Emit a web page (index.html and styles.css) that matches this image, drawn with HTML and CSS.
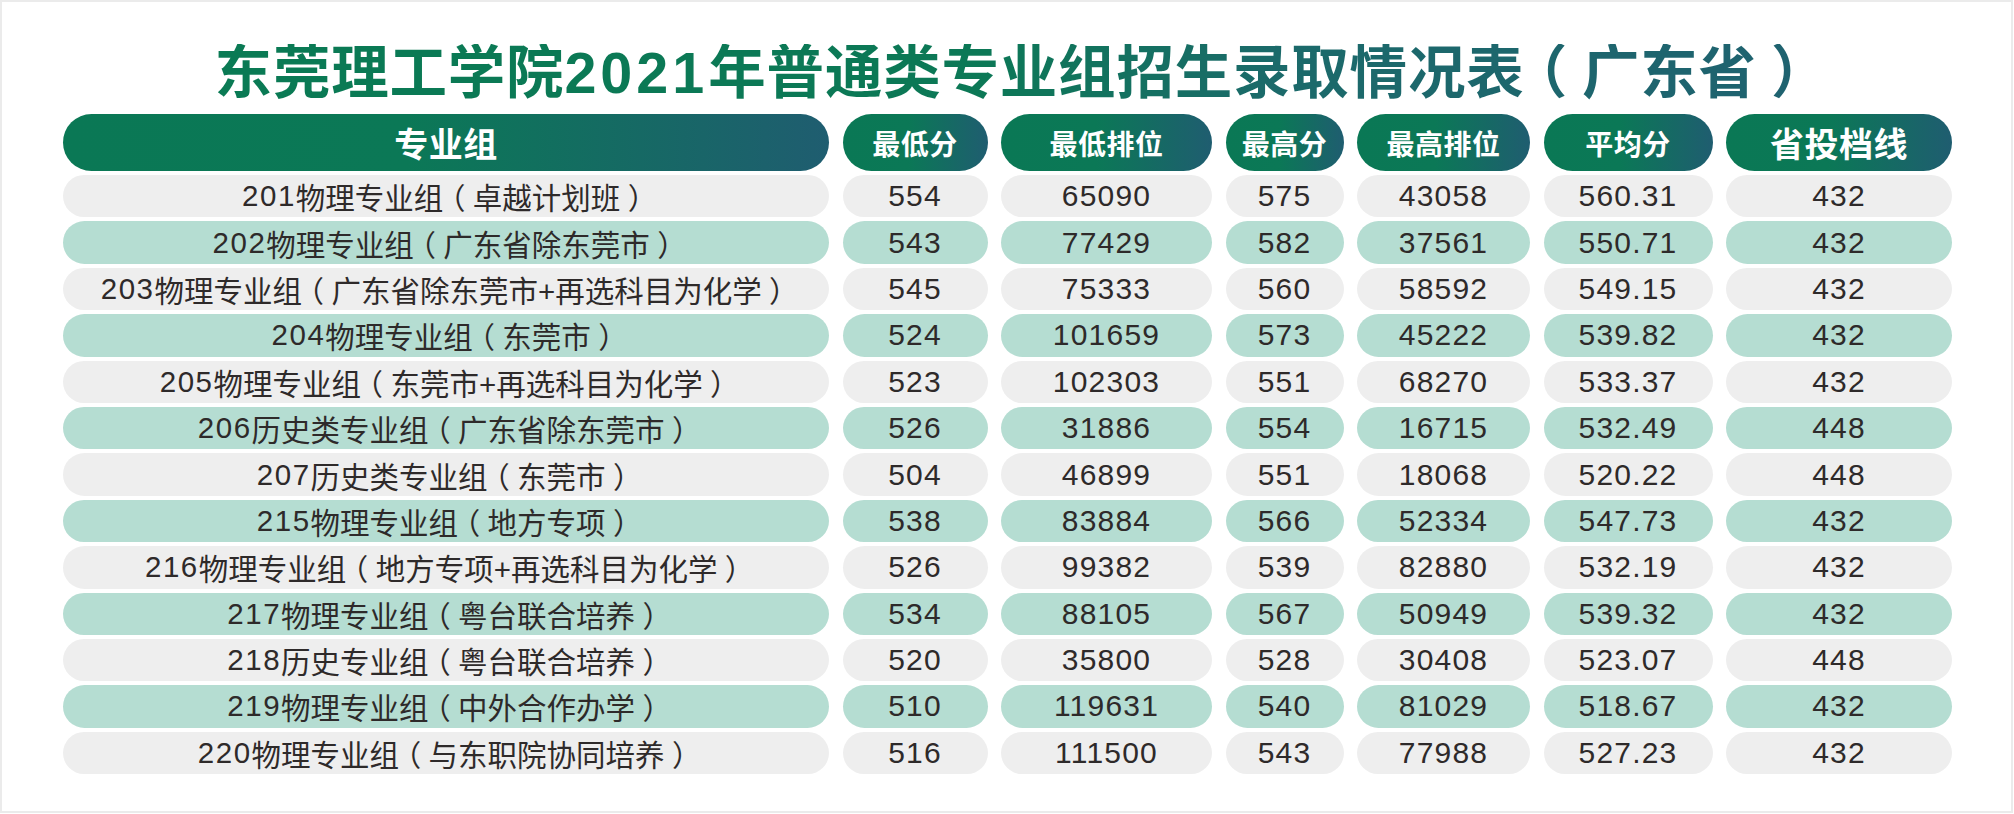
FILE: index.html
```html
<!DOCTYPE html>
<html lang="zh-CN">
<head>
<meta charset="utf-8">
<title>东莞理工学院2021年普通类专业组招生录取情况表（广东省）</title>
<link rel="stylesheet" href="styles.css">
</head>
<body>
<div class="frame">
  <div class="title-wrap">
    <h1 class="title">东莞理工学院<span class="yr">2021</span>年普通类专业组招生录取情况表<span class="pl">（</span>广东省<span class="pl">）</span></h1>
  </div>
  <div class="table">
    <div class="hd big">专业组</div>
    <div class="hd">最低分</div>
    <div class="hd">最低排位</div>
    <div class="hd">最高分</div>
    <div class="hd">最高排位</div>
    <div class="hd">平均分</div>
    <div class="hd big">省投档线</div>

    <div class="row">
      <div class="c name"><span class="code">201</span>物理专业组<span class="pl">（</span>卓越计划班<span class="pl">）</span></div>
      <div class="c n">554</div><div class="c n">65090</div><div class="c n">575</div><div class="c n">43058</div><div class="c n">560.31</div><div class="c n">432</div>
    </div>
    <div class="row alt">
      <div class="c name"><span class="code">202</span>物理专业组<span class="pl">（</span>广东省除东莞市<span class="pl">）</span></div>
      <div class="c n">543</div><div class="c n">77429</div><div class="c n">582</div><div class="c n">37561</div><div class="c n">550.71</div><div class="c n">432</div>
    </div>
    <div class="row">
      <div class="c name"><span class="code">203</span>物理专业组<span class="pl">（</span>广东省除东莞市+再选科目为化学<span class="pl">）</span></div>
      <div class="c n">545</div><div class="c n">75333</div><div class="c n">560</div><div class="c n">58592</div><div class="c n">549.15</div><div class="c n">432</div>
    </div>
    <div class="row alt">
      <div class="c name"><span class="code">204</span>物理专业组<span class="pl">（</span>东莞市<span class="pl">）</span></div>
      <div class="c n">524</div><div class="c n">101659</div><div class="c n">573</div><div class="c n">45222</div><div class="c n">539.82</div><div class="c n">432</div>
    </div>
    <div class="row">
      <div class="c name"><span class="code">205</span>物理专业组<span class="pl">（</span>东莞市+再选科目为化学<span class="pl">）</span></div>
      <div class="c n">523</div><div class="c n">102303</div><div class="c n">551</div><div class="c n">68270</div><div class="c n">533.37</div><div class="c n">432</div>
    </div>
    <div class="row alt">
      <div class="c name"><span class="code">206</span>历史类专业组<span class="pl">（</span>广东省除东莞市<span class="pl">）</span></div>
      <div class="c n">526</div><div class="c n">31886</div><div class="c n">554</div><div class="c n">16715</div><div class="c n">532.49</div><div class="c n">448</div>
    </div>
    <div class="row">
      <div class="c name"><span class="code">207</span>历史类专业组<span class="pl">（</span>东莞市<span class="pl">）</span></div>
      <div class="c n">504</div><div class="c n">46899</div><div class="c n">551</div><div class="c n">18068</div><div class="c n">520.22</div><div class="c n">448</div>
    </div>
    <div class="row alt">
      <div class="c name"><span class="code">215</span>物理专业组<span class="pl">（</span>地方专项<span class="pl">）</span></div>
      <div class="c n">538</div><div class="c n">83884</div><div class="c n">566</div><div class="c n">52334</div><div class="c n">547.73</div><div class="c n">432</div>
    </div>
    <div class="row">
      <div class="c name"><span class="code">216</span>物理专业组<span class="pl">（</span>地方专项+再选科目为化学<span class="pl">）</span></div>
      <div class="c n">526</div><div class="c n">99382</div><div class="c n">539</div><div class="c n">82880</div><div class="c n">532.19</div><div class="c n">432</div>
    </div>
    <div class="row alt">
      <div class="c name"><span class="code">217</span>物理专业组<span class="pl">（</span>粤台联合培养<span class="pl">）</span></div>
      <div class="c n">534</div><div class="c n">88105</div><div class="c n">567</div><div class="c n">50949</div><div class="c n">539.32</div><div class="c n">432</div>
    </div>
    <div class="row">
      <div class="c name"><span class="code">218</span>历史专业组<span class="pl">（</span>粤台联合培养<span class="pl">）</span></div>
      <div class="c n">520</div><div class="c n">35800</div><div class="c n">528</div><div class="c n">30408</div><div class="c n">523.07</div><div class="c n">448</div>
    </div>
    <div class="row alt">
      <div class="c name"><span class="code">219</span>物理专业组<span class="pl">（</span>中外合作办学<span class="pl">）</span></div>
      <div class="c n">510</div><div class="c n">119631</div><div class="c n">540</div><div class="c n">81029</div><div class="c n">518.67</div><div class="c n">432</div>
    </div>
    <div class="row">
      <div class="c name"><span class="code">220</span>物理专业组<span class="pl">（</span>与东职院协同培养<span class="pl">）</span></div>
      <div class="c n">516</div><div class="c n">111500</div><div class="c n">543</div><div class="c n">77988</div><div class="c n">527.23</div><div class="c n">432</div>
    </div>
  </div>
</div>
</body>
</html>
```

FILE: styles.css
```css
html, body {
  margin: 0;
  padding: 0;
  background: #ffffff;
}

.frame {
  box-sizing: border-box;
  width: 2013px;
  height: 813px;
  border: 2px solid #ebebeb;
  background: #ffffff;
  padding: 42px 0 0 61px;
  font-family: "Liberation Sans", "Noto Sans CJK SC", sans-serif;
}

.title-wrap {
  display: flex;
  justify-content: center;
  margin-left: -45px;
  height: 58px;
  margin-bottom: 12px;
}

.title {
  display: inline-block;
  margin: 0;
  font-size: 57.5px;
  line-height: 58px;
  font-weight: 700;
  letter-spacing: 0.8px;
  white-space: nowrap;
  color: #0b7a55;
  background: linear-gradient(to right, #0a7a54 0%, #0c7856 48%, #1b6a6a 66%, #1f6270 100%);
  -webkit-background-clip: text;
  background-clip: text;
  -webkit-text-fill-color: transparent;
}

.yr {
  letter-spacing: 4px;
}

.pl {
  display: inline-block;
  width: 1em;
  text-align: center;
  font-feature-settings: "halt" 1;
}

.table {
  display: grid;
  grid-template-columns: 766px 145px 211px 118px 173px 169px 226px;
  grid-template-rows: 57px;
  grid-auto-rows: 42.4px;
  column-gap: 13.5px;
  row-gap: 4px;
}

.hd {
  display: flex;
  align-items: center;
  justify-content: center;
  border-radius: 999px;
  background: linear-gradient(to right, #0a7855 0%, #0b7856 45%, #1f5d70 100%);
  color: #ffffff;
  font-family: "Noto Sans CJK SC", sans-serif;
  font-weight: 700;
  font-size: 28px;
  letter-spacing: 0.5px;
}

.hd.big {
  font-size: 34px;
}

.row {
  display: contents;
}

.c {
  display: flex;
  align-items: center;
  justify-content: center;
  border-radius: 999px;
  background: #eeeeee;
  color: #2e2a2a;
  white-space: nowrap;
}

.row.alt .c {
  background: #b5ddd2;
}

.name {
  font-size: 29.5px;
}

.code {
  letter-spacing: 1.5px;
}

.n {
  font-size: 30px;
  letter-spacing: 1.2px;
}
```
